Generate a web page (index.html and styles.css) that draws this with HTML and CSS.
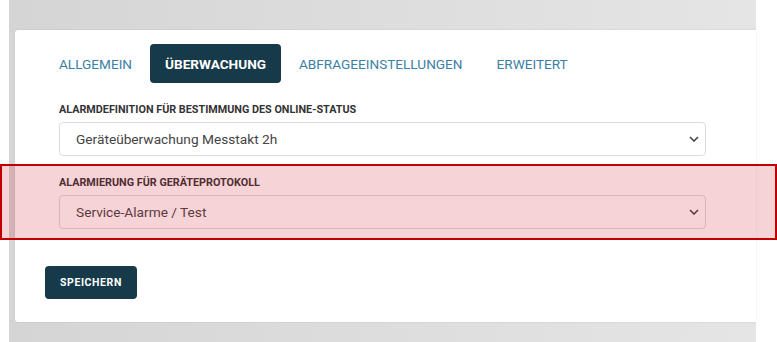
FILE: index.html
```html
<!DOCTYPE html>
<html lang="de">
<head>
    <meta charset="UTF-8">
    <meta name="viewport" content="width=device-width, initial-scale=1.0">
    <title>Überwachung</title>
    <link rel="stylesheet" href="styles.css">
</head>
<body>
    <div class="page">
        <div class="card">
            <div class="tabs">
                <a class="tab">ALLGEMEIN</a>
                <a class="tab active">ÜBERWACHUNG</a>
                <a class="tab">ABFRAGEEINSTELLUNGEN</a>
                <a class="tab">ERWEITERT</a>
            </div>

            <div class="form-group">
                <label>ALARMDEFINITION FÜR BESTIMMUNG DES ONLINE-STATUS</label>
                <div class="select">
                    <span>Geräteüberwachung Messtakt 2h</span>
                    <svg width="10" height="6" viewBox="0 0 10 6"><path d="M1 1l4 4 4-4" fill="none" stroke="#444" stroke-width="1.6"/></svg>
                </div>
            </div>
            <div class="form-group">
                <label>ALARMIERUNG FÜR GERÄTEPROTOKOLL</label>
                <div class="select">
                    <span>Service-Alarme / Test</span>
                    <svg width="10" height="6" viewBox="0 0 10 6"><path d="M1 1l4 4 4-4" fill="none" stroke="#444" stroke-width="1.6"/></svg>
                </div>
            </div>

            <button class="save">SPEICHERN</button>
        </div>
    </div>

    <!-- highlight over the second field -->
    <div class="highlight"></div>
</body>
</html>
```

FILE: styles.css
```css
body {
    margin: 0;
    background: #fff;
    font-family: Roboto, "Liberation Sans", sans-serif;
    overflow: hidden;
}
.page {
    margin-left: 9px;
    width: 747px;
    height: 342px;
    box-sizing: border-box;
    padding: 30px 0 0 6px;
    background: linear-gradient(to right, #d5d5d5, #e5e5e5);
}
.card {
    height: 292px;
    box-sizing: border-box;
    background: #fff;
    border-radius: 3px 0 0 3px;
    box-shadow: 0 0 2px rgba(0, 0, 0, 0.12);
    padding: 14px 0 0 30px;
}
.tabs {
    display: flex;
    gap: 2px;
    margin-left: -2px;
}
.tab {
    display: block;
    height: 39px;
    line-height: 40px;
    padding: 0 16px;
    font-size: 13.6px;
    color: #3b7fa6;
    border-radius: 4px;
}
.tab.active {
    background: #173a4a;
    color: #fff;
    font-weight: bold;
    padding: 0 15px;
}
.form-group {
    padding-left: 14px;
    width: 647px;
    margin-top: 21px;
}
.form-group label {
    display: block;
    font-size: 10.8px;
    font-weight: bold;
    color: #333;
    height: 12px;
    line-height: 12px;
    margin-bottom: 6px;
}
.select {
    display: flex;
    align-items: center;
    justify-content: space-between;
    height: 34px;
    box-sizing: border-box;
    border: 1px solid #dcdcdc;
    border-radius: 4px;
    padding: 0 6px 0 16px;
    font-size: 13.7px;
    color: #444;
}
.save {
    display: block;
    margin-top: 37px;
    height: 33px;
    padding: 0 15px;
    background: #173a4a;
    color: #fff;
    border: none;
    border-radius: 4px;
    font-family: Roboto, sans-serif;
    font-size: 10.5px;
    font-weight: bold;
    letter-spacing: 0.6px;
}
.highlight {
    position: absolute;
    left: 0;
    top: 164px;
    width: 777px;
    height: 76px;
    box-sizing: border-box;
    border: 2px solid #c00000;
    background: rgba(200, 20, 40, 0.19);
}
```
